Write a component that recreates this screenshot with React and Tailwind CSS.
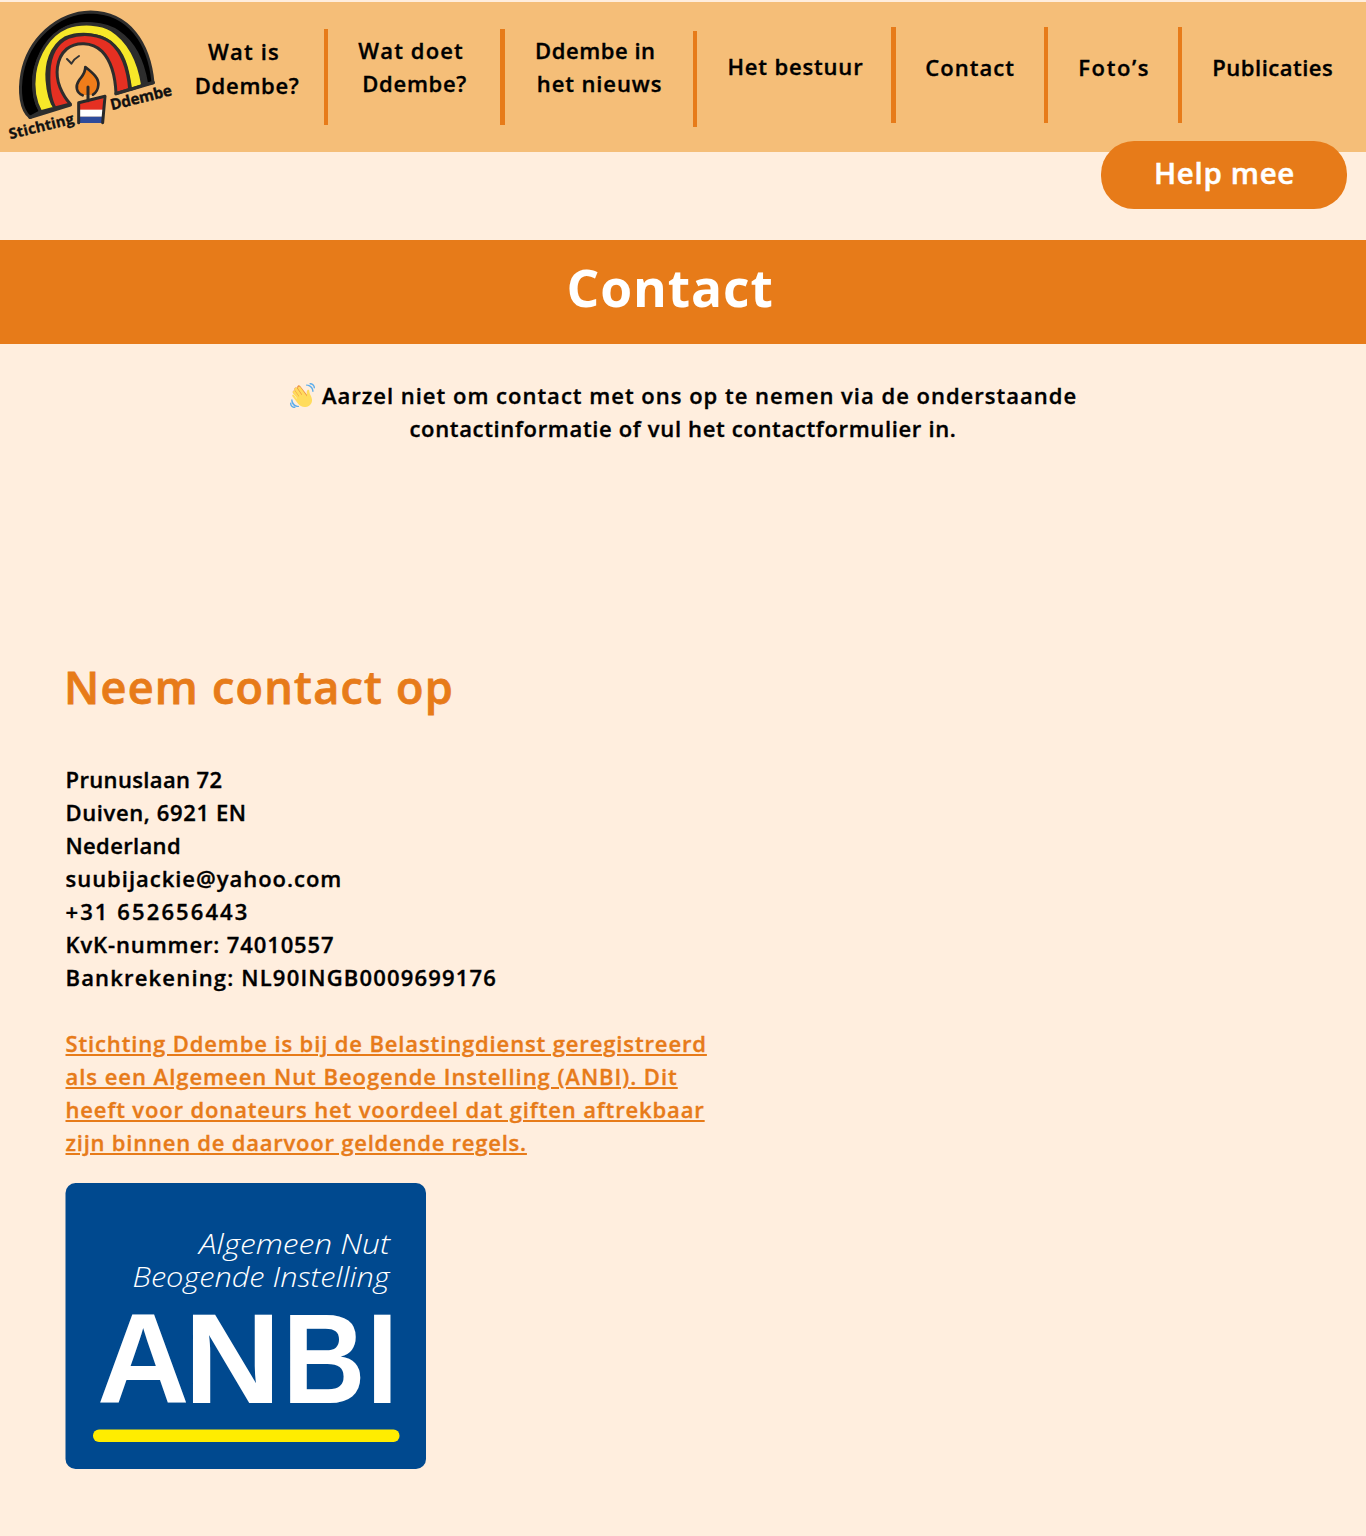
const navItems = [
  {
    cell: "w-[143.8px] pt-[6px]",
    bar: "mt-[27px]",
    lines: [
      ["Wat is", "ml-[28px] tracking-[1.2px]"],
      ["Ddembe?", "ml-[14.8px] mt-[0.7px] tracking-[0.7px]"],
    ],
    top: "pt-[33px]",
  },
  {
    cell: "w-[172px]",
    bar: "mt-[27px]",
    lines: [
      ["Wat doet", "ml-[30px] tracking-[1.15px]"],
      ["Ddembe?", "ml-[34px] tracking-[0.7px]"],
    ],
    top: "pt-[32px]",
  },
  {
    cell: "w-[188px]",
    bar: "mt-[29px]",
    lines: [
      ["Ddembe in", "ml-[30.2px] tracking-[0.55px]"],
      ["het nieuws", "ml-[32px] tracking-[0.9px]"],
    ],
    top: "pt-[32px]",
  },
  {
    cell: "w-[194px]",
    bar: "mt-[25px]",
    lines: [["Het bestuur", "ml-[30.2px] tracking-[0.83px]"]],
    top: "pt-[48px]",
  },
  {
    cell: "w-[148px]",
    bar: "mt-[25px]",
    lines: [["Contact", "ml-[29.5px] tracking-[1.05px]"]],
    top: "pt-[49px]",
  },
  {
    cell: "w-[129.5px]",
    bar: "mt-[25px]",
    lines: [["Foto’s", "ml-[30px] tracking-[1.6px]"]],
    top: "pt-[49px]",
  },
  {
    cell: "w-[183px]",
    bar: null,
    lines: [["Publicaties", "ml-[30px] tracking-[0.5px]"]],
    top: "pt-[49px]",
  },
];

const address = [
  ["Prunuslaan 72", "tracking-[0.36px]"],
  ["Duiven, 6921 EN", "tracking-[0.62px]"],
  ["Nederland", "tracking-[0.35px]"],
  ["suubijackie@yahoo.com", "tracking-[0.98px]"],
  ["+31 652656443", "tracking-[2.1px]"],
  ["KvK-nummer: 74010557", "tracking-[0.88px]"],
  ["Bankrekening: NL90INGB0009699176", "tracking-[1.18px]"],
];

const anbiLines = [
  ["Stichting Ddembe is bij de Belastingdienst geregistreerd", "tracking-[0.87px]"],
  ["als een Algemeen Nut Beogende Instelling (ANBI). Dit", "tracking-[0.97px]"],
  ["heeft voor donateurs het voordeel dat giften aftrekbaar", "tracking-[0.86px]"],
  ["zijn binnen de daarvoor geldende regels.", "tracking-[0.77px]"],
];

function Logo() {
  return (
    <svg viewBox="0 0 540 444" className="h-[148px] w-[180px] shrink-0" aria-label="Stichting Ddembe">
      <g transform="translate(0 -6)" strokeLinejoin="round" strokeLinecap="round">
        <g stroke="#2d2d2d" strokeWidth="9">
          <path fill="#000" d="M90 352C62 330 56 275 66 220C85 120 170 38 272 36C388 38 448 130 459 248L440 252C430 190 408 132 355 96C315 66 240 64 200 82C150 106 108 170 101 230C98 275 105 310 122 335Z" />
          <path fill="#f7e829" d="M122 335C102 300 98 265 104 220C112 165 145 105 200 82C245 66 305 70 335 90C388 124 416 182 428 256L392 268C382 198 370 156 332 127C290 98 235 98 197 113C150 140 138 195 141 240C144 280 150 305 165 324Z" />
          <path fill="#e53022" d="M165 324C150 298 145 265 147 215C149 165 170 127 205 112C250 97 300 103 332 127C368 158 384 205 389 268L348 281C346 232 336 185 306 154C275 125 228 125 200 147C168 175 165 225 180 262C188 282 198 298 211 312Z" />
        </g>
        <path d="M428 256L440 252C430 190 408 132 355 96L335 90C388 124 416 182 428 256Z" fill="#2d2d2d" />
        <path d="M90 352L211 315M348 281L460 248" stroke="#2d2d2d" strokeWidth="10" />
        <path d="M201 177C206 182 211 187 214 191C220 181 228 173 237 168" fill="none" stroke="#333" strokeWidth="6" />
        <path d="M256 201C280 222 297 235 295 255C294 272 284 285 268 285H250C233 280 226 262 235 244C243 230 256 222 256 201Z" fill="#ef7d1a" />
        <path d="M248 286C228 278 226 258 236 243C245 229 256 222 256 201C280 220 297 235 295 255C294 270 288 278 279 284" fill="none" stroke="#292929" strokeWidth="8" />
        <path d="M236 307L310 291V330H240Z" fill="#e53022" />
        <path d="M240 329H309V350H240Z" fill="#fff" />
        <path d="M240 350H309V369H240Z" fill="#2e4b9b" />
        <path d="M264 261V302M236 368V308L315 289L308 368" fill="none" stroke="#292929" strokeWidth="9" />
        <g fill="#111" stroke="#111" strokeWidth="1" fontFamily="'Open Sans', sans-serif" fontWeight="700">
          <text transform="translate(31 418) rotate(-14)" fontSize="44" textLength="199">Stichting</text>
          <text transform="translate(335 331) rotate(-14)" fontSize="46" textLength="189">Ddembe</text>
        </g>
      </g>
    </svg>
  );
}

function Wave() {
  return (
    <svg viewBox="0 0 36 36" className="mr-[7px] inline-block h-[25px] w-[25px] align-[-4px]" aria-label="Zwaaiende hand">
      <path fill="#ef9645" d="M4.9 11.2c.8-.6 2-.6 2.8.3l-1-1.4c-.8-1.1-.5-2.4.5-3.2 1.100-.8 3.700.2 3.700.2-.8-1.100-.7-2.500.4-3.300 1.100-.8 2.600-.5 3.400.6L25.600 18.500 24.500 29.100 15.700 25.800 4.400 14.500c-.8-1.100-.6-2.500.5-3.300z" />
      <path fill="#ffdc5d" d="M3.400 19s-.8-1.200.4-2 2 .3 2 .3l3.700 5.300.4-.7L4.400 14c0 0-.9-1.500.5-2.500s2.500.5 2.500.5l5.200 7.500.6-.6L7 10c0 0-1-1.700.6-2.800s2.700.6 2.700.6l6.400 9.400.7-.6L11.800 8.200c0 0-1-1.600.5-2.600s2.600.5 2.600.5l9.600 13.500c.2-3-1.700-7.900.9-9.700 1.400-1 2.300.5 2.300.5s.1 3.500 1.500 6.400c2.600 4.700 4.600 11-1.200 15.500-5.800 4.100-12.500 2.800-16.900-3.100z" />
      <path fill="#5dadec" d="M12 32.700c-4 0-8.300-4.300-8.300-8.300 0-.6-.4-1-1-1s-1 .4-1 1c0 6 4.300 10.300 10.300 10.300.6 0 1-.4 1-1s-.4-1-1-1zM7 34c-3 0-5-2-5-5 0-.6-.4-1-1-1s-1 .4-1 1c0 4 3 7 7 7 .6 0 1-.4 1-1s-.4-1-1-1zM24 2c-.6 0-1 .4-1 1s.4 1 1 1c4 0 8 3.600 8 8 0 .6.400 1 1 1s1-.4 1-1c0-5.500-4.500-10-10-10zM29 0c-.6 0-1 .4-1 1s.4 1 1 1c3 0 5 2.200 5 5 0 .6.400 1 1 1s1-.4 1-1c0-3.900-2.900-7-7-7z" />
    </svg>
  );
}

function AnbiBadge() {
  return (
    <svg viewBox="0 0 361 286" className="mt-[24px] -ml-[0.5px] h-[286px] w-[361px]" aria-label="ANBI">
      <rect x="0.500" width="360.500" height="286" rx="10" fill="#00498f" />
      <g fill="#fff" fontFamily="'Open Sans', sans-serif" fontSize="28" fontStyle="italic" fontWeight="300">
        <text x="134" y="70.500" textLength="191" lengthAdjust="spacingAndGlyphs">Algemeen Nut</text>
        <text x="67.500" y="104" textLength="257" lengthAdjust="spacingAndGlyphs">Beogende Instelling</text>
      </g>
      <text y="220.300" fill="#fff" fontFamily="'Liberation Sans', sans-serif" fontWeight="700" fontSize="128">
        <tspan x="32">A</tspan>
        <tspan x="119" textLength="97" lengthAdjust="spacingAndGlyphs">N</tspan>
        <tspan x="217.500" textLength="83" lengthAdjust="spacingAndGlyphs">B</tspan>
        <tspan x="301.500" textLength="31.500" lengthAdjust="spacingAndGlyphs">I</tspan>
      </text>
      <rect x="28" y="246.500" width="306.500" height="12.500" rx="6" fill="#ffed00" />
    </svg>
  );
}

export default function App() {
  return (
    <div className="min-h-[1536px] w-[1366px] overflow-hidden bg-[#ffeede] pt-[2px] font-['Open_Sans',sans-serif] text-[22px] leading-[33px] font-semibold text-black [-webkit-text-stroke:0.35px]">
      <header className="flex h-[149.5px] bg-[#f5be78]">
        <Logo />
        <nav className="flex">
          {navItems.map((item, i) => (
            <div key={i} className="flex">
              <div className={`${item.cell} ${item.top} whitespace-nowrap`}>
                {item.lines.map(([text, cls]) => (
                  <div key={text} className={cls}>{text}</div>
                ))}
              </div>
              {item.bar && <div className={`${item.bar} h-[96px] w-[4.5px] shrink-0 bg-[#e77b19]`} />}
            </div>
          ))}
        </nav>
      </header>

      <div className="flex h-[88px] justify-end pr-[19.5px]">
        <button className="relative -mt-[10.5px] h-[68px] w-[246px] rounded-[33px] bg-[#e77b19] pb-[6px] pl-[2px] text-[29.5px] font-semibold tracking-[0.7px] text-white [-webkit-text-stroke:0.5px]">
          Help mee
        </button>
      </div>

      <div className="h-[104.5px] bg-[#e77b19] pl-[566.5px]">
        <h1 className="pt-[10px] text-[51.5px] leading-[75px] font-bold tracking-[0.9px] text-white [-webkit-text-stroke:0px]">Contact</h1>
      </div>

      <div className="mt-[35px] text-center whitespace-nowrap">
        <p className="pl-[1px] tracking-[1px]">
          <Wave />
          Aarzel niet om contact met ons op te nemen via de onderstaande
        </p>
        <p className="tracking-[0.66px]">contactinformatie of vul het contactformulier in.</p>
      </div>

      <main className="pt-[209px] pl-[65.500px] whitespace-nowrap">
        <h2 className="-ml-[1.5px] text-[45px] leading-[66px] tracking-[1.25px] text-[#e77b19] [-webkit-text-stroke:0.8px]">Neem contact op</h2>
        <address className="mt-[43px] not-italic">
          {address.map(([text, cls]) => (
            <div key={text} className={cls}>{text}</div>
          ))}
        </address>
        <a className="mt-[33px] block text-[#e77b19] underline decoration-[2px] underline-offset-[1.5px]">
          {anbiLines.map(([text, cls]) => (
            <span key={text} className={`block ${cls}`}>{text}</span>
          ))}
        </a>
        <AnbiBadge />
      </main>
    </div>
  );
}
